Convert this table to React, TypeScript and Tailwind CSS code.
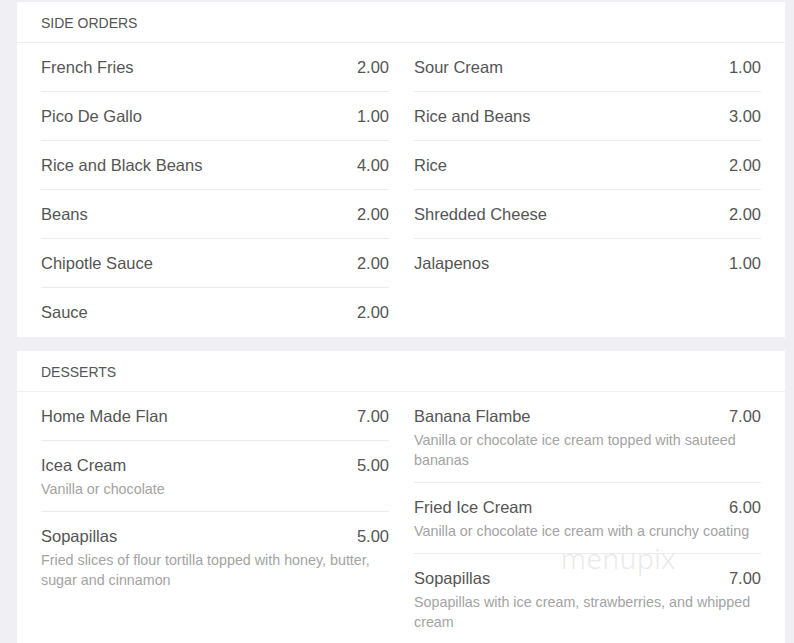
import React from 'react';

interface MenuItem {
  name: string;
  price: string;
  description?: string;
}

interface MenuSection {
  title: string;
  left: MenuItem[];
  right: MenuItem[];
}

const sections: MenuSection[] = [
  {
    title: 'SIDE ORDERS',
    left: [
      { name: 'French Fries', price: '2.00' },
      { name: 'Pico De Gallo', price: '1.00' },
      { name: 'Rice and Black Beans', price: '4.00' },
      { name: 'Beans', price: '2.00' },
      { name: 'Chipotle Sauce', price: '2.00' },
      { name: 'Sauce', price: '2.00' },
    ],
    right: [
      { name: 'Sour Cream', price: '1.00' },
      { name: 'Rice and Beans', price: '3.00' },
      { name: 'Rice', price: '2.00' },
      { name: 'Shredded Cheese', price: '2.00' },
      { name: 'Jalapenos', price: '1.00' },
    ],
  },
  {
    title: 'DESSERTS',
    left: [
      { name: 'Home Made Flan', price: '7.00' },
      { name: 'Icea Cream', price: '5.00', description: 'Vanilla or chocolate' },
      {
        name: 'Sopapillas',
        price: '5.00',
        description: 'Fried slices of flour tortilla topped with honey, butter, sugar and cinnamon',
      },
    ],
    right: [
      {
        name: 'Banana Flambe',
        price: '7.00',
        description: 'Vanilla or chocolate ice cream topped with sauteed bananas',
      },
      {
        name: 'Fried Ice Cream',
        price: '6.00',
        description: 'Vanilla or chocolate ice cream with a crunchy coating',
      },
      {
        name: 'Sopapillas',
        price: '7.00',
        description: 'Sopapillas with ice cream, strawberries, and whipped cream',
      },
    ],
  },
];

function ItemRow({ item, last }: { item: MenuItem; last: boolean }) {
  return (
    <div className={`py-3 ${last ? '' : 'border-b border-[#ececec]'}`}>
      <div className="flex justify-between text-[16.5px] leading-6 text-[#555]">
        <span>{item.name}</span>
        <span>{item.price}</span>
      </div>
      {item.description && (
        <p className="mt-[2px] text-[14.3px] leading-5 text-[#a3a3a3]">{item.description}</p>
      )}
    </div>
  );
}

function Column({ items }: { items: MenuItem[] }) {
  return (
    <div className="flex flex-col">
      {items.map((item, i) => (
        <ItemRow key={i} item={item} last={i === items.length - 1} />
      ))}
    </div>
  );
}

function Section({ section, grow }: { section: MenuSection; grow?: boolean }) {
  return (
    <div className={`ml-[17px] w-[768px] bg-white ${grow ? 'pb-10' : 'pb-px'}`}>
      <div className="h-[41px] pt-[3px] px-6 flex items-center border-b border-[#efefef] text-[14px] text-[#555]">
        {section.title}
      </div>
      <div className="px-6 grid grid-cols-[348px_347px] gap-x-[25px]">
        <Column items={section.left} />
        <Column items={section.right} />
      </div>
    </div>
  );
}

export default function App() {
  return (
    <div
      className="relative min-h-[643px] overflow-hidden bg-[#f0f0f4] pt-[2px] flex flex-col gap-[14px]"
      style={{ fontFamily: '"Liberation Sans", Arial, sans-serif' }}
    >
      {sections.map((s, i) => (
        <Section key={s.title} section={s} grow={i === sections.length - 1} />
      ))}
      <div
        className="absolute left-[561px] top-[542px] text-[28px] leading-8 font-light tracking-wide text-[#e8e8e8] pointer-events-none"
        style={{ fontFamily: '"Open Sans", sans-serif' }}
      >
        menupix
      </div>
    </div>
  );
}
